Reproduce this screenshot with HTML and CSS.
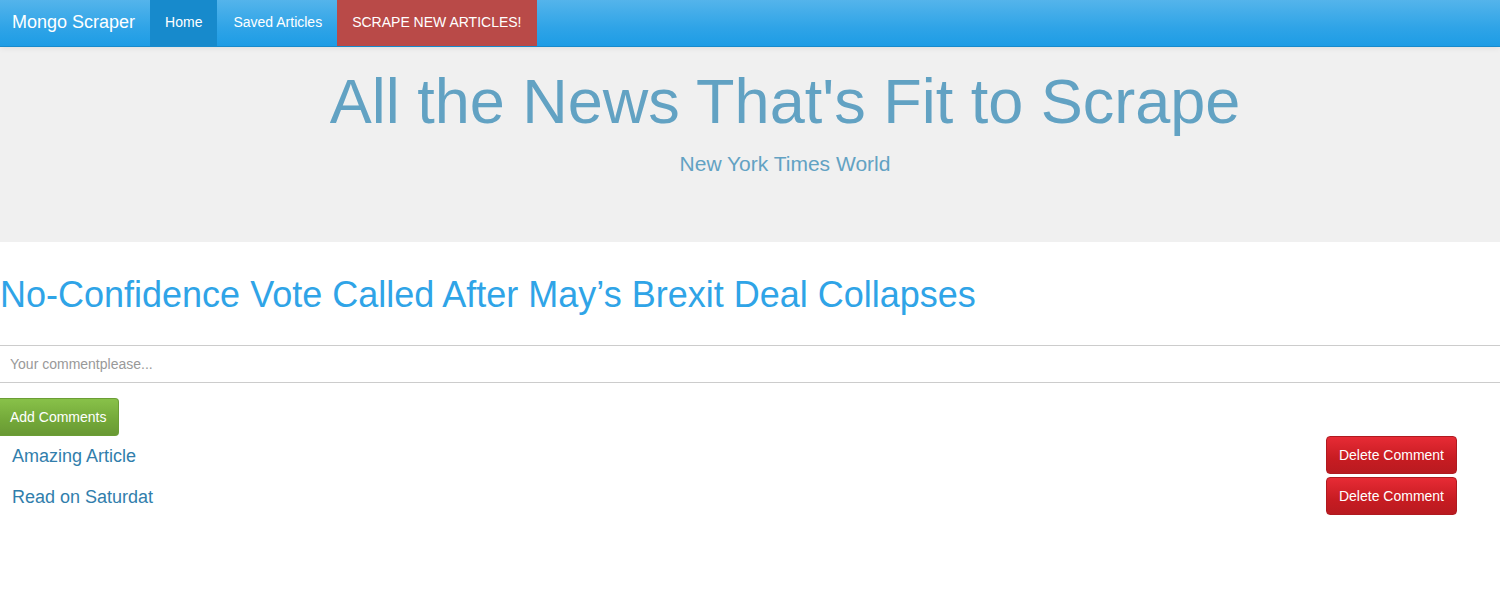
FILE: index.html
```html
<!DOCTYPE html>
<html>
<head>
<meta charset="utf-8">
<title>Mongo Scraper</title>
<link rel="stylesheet" href="styles.css">
</head>
<body>
<nav class="navbar">
  <a class="brand" href="#">Mongo Scraper</a>
  <ul class="nav">
    <li><a class="nav-link active" href="#">Home</a></li>
    <li><a class="nav-link saved" href="#">Saved Articles</a></li>
    <li><a class="nav-link scrape" href="#">SCRAPE NEW ARTICLES!</a></li>
  </ul>
</nav>
<header class="jumbotron">
  <h1 class="jumbo-title">All the News That's Fit to Scrape</h1>
  <p class="jumbo-sub">New York Times World</p>
</header>
<main class="article">
  <h1 class="article-title">No-Confidence Vote Called After May’s Brexit Deal Collapses</h1>
  <input class="comment-input" type="text" placeholder="Your commentplease...">
  <button class="btn btn-success">Add Comments</button>
  <ul class="comments">
    <li class="comment">
      <span class="comment-text">Amazing Article</span>
      <button class="btn btn-danger">Delete Comment</button>
    </li>
    <li class="comment">
      <span class="comment-text">Read on Saturdat</span>
      <button class="btn btn-danger">Delete Comment</button>
    </li>
  </ul>
</main>
</body>
</html>
```
FILE: styles.css
```css
* { box-sizing: border-box; }
html, body { margin: 0; padding: 0; }
body {
  font-family: "Liberation Sans", Arial, sans-serif;
  font-size: 14px;
  line-height: 1.42857;
  color: #555;
  background: #fff;
}
a { text-decoration: none; }

.navbar {
  display: flex;
  align-items: stretch;
  height: 47px;
  background: linear-gradient(#54b4eb, #2fa4e7 60%, #1d9ce5);
  border-bottom: 1px solid #178acc;
  box-shadow: 0 1px 6px rgba(0,0,0,0.08);
  position: relative;
}
.brand {
  display: flex;
  align-items: center;
  padding: 0 15px 0 12px;
  color: #fff;
  font-size: 18px;
}
.nav {
  display: flex;
  list-style: none;
  margin: 0;
  padding: 0;
}
.nav li { display: flex; }
.nav-link {
  display: flex;
  align-items: center;
  padding: 0 15px 1px;
  color: #fff;
  font-size: 14px;
}
.nav-link.active { background: #178acc; }
.nav-link.saved { padding: 0 15px 1px 16px; }
.nav-link.scrape { background: #b94a48; padding: 0 15px 1px; }

.jumbotron {
  background: #f0f0f0;
  height: 195px;
  padding: 20px 0 0 70px;
  text-align: center;
  color: #62a2c3;
}
.jumbo-title {
  margin: 0;
  font-size: 63px;
  font-weight: 400;
  line-height: 1.1;
}
.jumbo-sub {
  margin: 13px 0 0;
  font-size: 21px;
  font-weight: 400;
  line-height: 1.4;
}

.article { padding: 0; }
.article-title {
  margin: 33px 0 30px;
  font-size: 36px;
  font-weight: 400;
  line-height: 1.1;
  color: #2fa4e7;
}
.comment-input {
  display: block;
  width: 100%;
  height: 38px;
  margin: 0;
  padding: 6px 10px;
  border: 0;
  border-top: 1px solid #ccc;
  border-bottom: 1px solid #ccc;
  font-family: inherit;
  font-size: 14px;
  color: #555;
  outline: none;
}
.comment-input::placeholder { color: #999; }

.btn {
  display: inline-block;
  height: 38px;
  padding: 0 12px 0 10px;
  border-radius: 4px;
  font-family: inherit;
  font-size: 14px;
  color: #fff;
  cursor: pointer;
}
.btn-success {
  margin-top: 15px;
  background: linear-gradient(#88c149, #73a839 60%, #699934);
  border: 1px solid #6b9e35;
  border-left: 0;
  border-radius: 0 4px 4px 0;
}
.btn-danger {
  width: 131px;
  padding: 0;
  background: linear-gradient(#e72b35, #c71c22 60%, #b91a20);
  border: 1px solid #b01a20;
}

.comments {
  list-style: none;
  margin: 0;
  padding: 0 43px 0 12px;
}
.comment {
  display: flex;
  justify-content: space-between;
  align-items: center;
  margin-bottom: 3px;
}
.comment-text {
  padding-top: 4px;
  font-size: 18px;
  color: #317eac;
}
```
